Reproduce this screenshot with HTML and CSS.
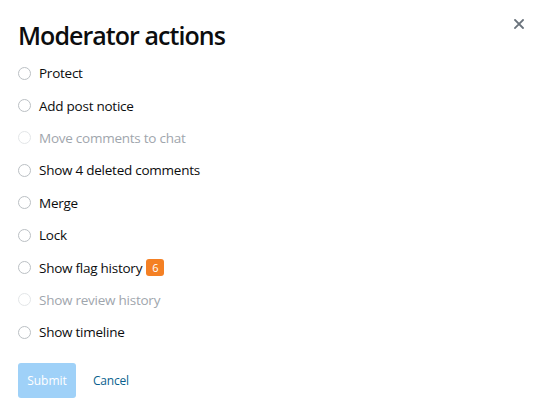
FILE: index.html
```html
<!DOCTYPE html>
<html>
<head>
<meta charset="utf-8">
<link rel="stylesheet" href="styles.css">
</head>
<body>
<div class="modal">
  <button class="close" aria-label="Close">
    <svg width="10" height="10" viewBox="0 0 10 10"><path d="M1 1L9 9M9 1L1 9" stroke="#6a737c" stroke-width="1.8" stroke-linecap="square"/></svg>
  </button>
  <h1 class="title">Moderator actions</h1>
  <ul class="options">
    <li class="option"><span class="radio"></span><span>Protect</span></li>
    <li class="option"><span class="radio"></span><span>Add post notice</span></li>
    <li class="option disabled"><span class="radio"></span><span>Move comments to chat</span></li>
    <li class="option"><span class="radio"></span><span>Show 4 deleted comments</span></li>
    <li class="option"><span class="radio"></span><span>Merge</span></li>
    <li class="option"><span class="radio"></span><span>Lock</span></li>
    <li class="option"><span class="radio"></span><span>Show flag history</span><span class="badge">6</span></li>
    <li class="option disabled"><span class="radio"></span><span>Show review history</span></li>
    <li class="option"><span class="radio"></span><span>Show timeline</span></li>
  </ul>
  <div class="actions">
    <button class="submit">Submit</button>
    <button class="cancel">Cancel</button>
  </div>
</div>
</body>
</html>
```
FILE: styles.css
```css
* { box-sizing: border-box; }
html, body { margin: 0; padding: 0; background: #fff; }
body { font-family: "Open Sans", "Noto Sans", sans-serif; color: #0c0d0e; }
.modal { position: relative; padding: 16px 18px 0 18px; width: 540px; height: 419px; }
.close { position: absolute; top: 19px; right: 16px; background: none; border: 0; padding: 0; width: 10px; height: 10px; display: flex; }
.title { margin: 0 0 3px 0; font-size: 25px; font-weight: 600; line-height: 38px; letter-spacing: -0.95px; }
.options { list-style: none; margin: 0; padding: 0; display: flex; flex-direction: column; }
.option { display: flex; align-items: center; height: 32.4px; font-size: 13.5px; letter-spacing: -0.25px; }
.radio { width: 13px; height: 13px; border: 1px solid #bbc0c4; border-radius: 50%; margin: 0 8px 0 0; flex: none; }
.option.disabled { color: #9fa6ad; }
.option.disabled .radio { border-color: #e3e6e8; }
.badge { background: #f48024; color: #fff; font-size: 11px; line-height: 17px; padding: 0 6px; border-radius: 3px; margin-left: 4px; letter-spacing: 0; }
.actions { display: flex; align-items: center; gap: 6px; margin-top: 14px; }
.submit { background: #9fd1f8; color: #fff; border: 0; border-radius: 3px; font-family: inherit; font-size: 12px; width: 58px; height: 35px; padding: 0; }
.cancel { background: none; border: 0; color: #0a5f8e; font-family: inherit; font-size: 12px; padding: 0 11px; height: 35px; letter-spacing: -0.2px; }
```
